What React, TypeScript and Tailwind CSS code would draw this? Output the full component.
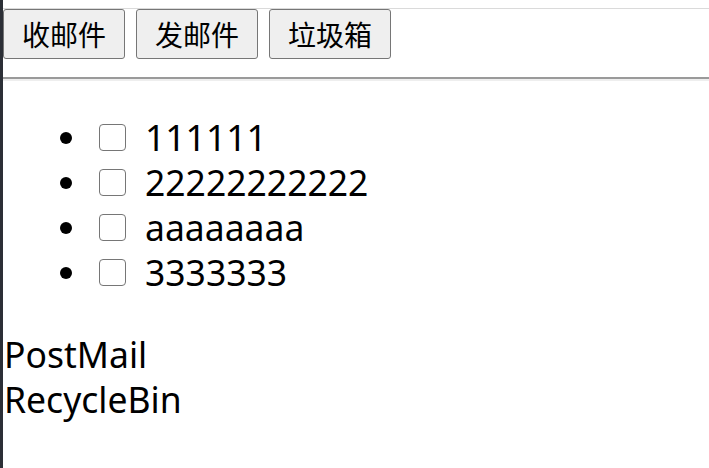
const TABS = ['收邮件', '发邮件', '垃圾箱'];
const MAILS = ['111111', '22222222222', 'aaaaaaaa', '3333333'];

const latin = { fontFamily: '"Segoe UI", "Noto Sans", "Noto Sans CJK SC", sans-serif' };
const cjk = { fontFamily: '"Noto Sans CJK SC", "Microsoft YaHei", sans-serif' };

export default function App() {
  return (
    <div className="flex h-[468px] w-[709px] overflow-hidden bg-white text-black">
      <div className="w-[3px] shrink-0 bg-[#2c2f36]" />
      <div className="flex-1">
        <div className="h-[8px]" />
        <div className="flex gap-[11px] border-t border-[#dadada]">
          {TABS.map((t) => (
            <button
              key={t}
              className="flex h-[50px] w-[122px] items-center justify-center rounded-[3px] border border-[#767676] bg-[#efefef] text-[28px] leading-none"
              style={cjk}
            >
              {t}
            </button>
          ))}
        </div>
        <div className="mt-[18px] border-t-2 border-b-2 border-t-[#9a9a9a] border-b-[#eeeeee]" />

        <ul className="mt-[34px]" style={latin}>
          {MAILS.map((m) => (
            <li key={m} className="flex h-[45px] items-center text-[35.5px] leading-[45px]">
              <span className="ml-[57px] h-[12px] w-[12px] rounded-full bg-black" />
              <span className="ml-[27px] h-[27px] w-[27px] rounded-[4px] border border-[#767676] bg-white" />
              <span className="ml-[19px]">{m}</span>
            </li>
          ))}
        </ul>

        <div className="mt-[37px] text-[35.5px] leading-[45px]" style={latin}>
          <div className="pl-[1px]">PostMail</div>
          <div className="pl-[1px]">RecycleBin</div>
        </div>
      </div>
    </div>
  );
}
